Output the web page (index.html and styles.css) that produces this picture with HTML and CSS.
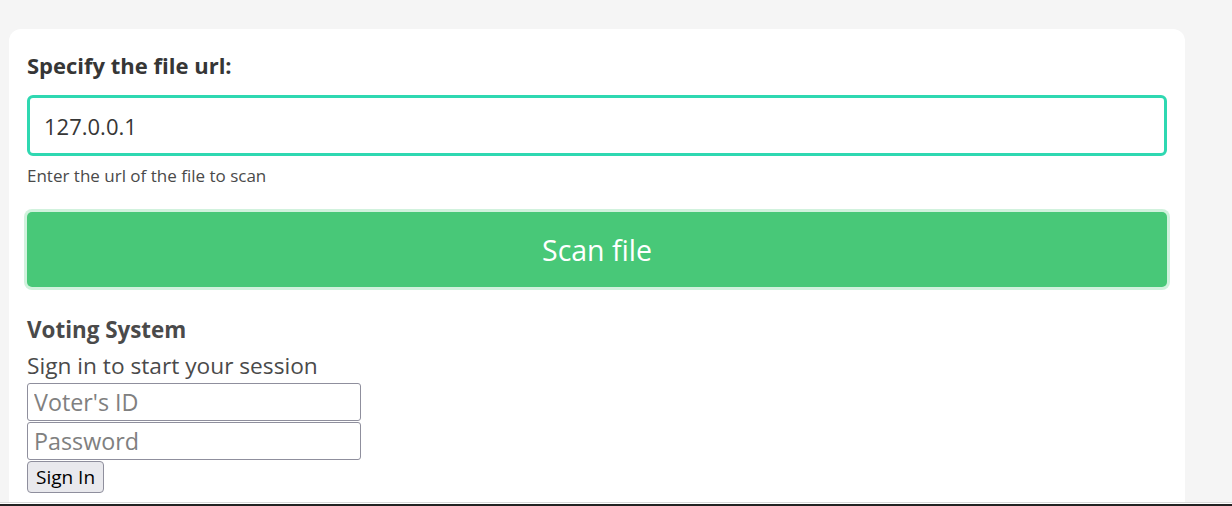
FILE: index.html
```html
<!DOCTYPE html>
<html>
<head>
<meta charset="utf-8">
<link rel="stylesheet" href="styles.css">
</head>
<body>
<div class="card">
  <form class="scan">
    <label class="label">Specify the file url:</label>
    <input class="url" type="text" value="127.0.0.1">
    <p class="help">Enter the url of the file to scan</p>
    <button type="button" class="scan-btn">Scan file</button>
  </form>
  <div class="voting">
    <h3 class="v-title">Voting System</h3>
    <p class="v-sub">Sign in to start your session</p>
    <input class="v-input" type="text" placeholder="Voter's ID">
    <input class="v-input" type="password" placeholder="Password">
    <button type="button" class="v-btn">Sign In</button>
  </div>
</div>
<div class="bottom-edge"></div>
</body>
</html>
```
FILE: styles.css
```css
html, body {
  margin: 0;
  background: #f5f5f5;
  overflow: hidden;
}
body {
  padding: 29px 0 0 9px;
  font-family: "Open Sans", "Noto Sans", sans-serif;
  height: 506px;
  box-sizing: border-box;
}
.card {
  width: 1176px;
  height: 477px;
  box-sizing: border-box;
  background: #fff;
  border-radius: 12px 12px 0 0;
  padding: 21px 18px 0 18px;
}
.scan {
  display: flex;
  flex-direction: column;
  margin: 0;
}
.label {
  font-size: 22px;
  font-weight: 700;
  line-height: 30px;
  color: #363636;
}
.url {
  margin-top: 15px;
  height: 61px;
  box-sizing: border-box;
  border: 3px solid #2fd8b1;
  border-radius: 6px;
  padding: 0 14px;
  font-family: inherit;
  font-size: 22px;
  color: #363636;
  outline: none;
}
.help {
  margin: 9px 0 0 0;
  font-size: 17px;
  line-height: 22px;
  color: #4a4a4a;
}
.scan-btn {
  margin-top: 25px;
  height: 75px;
  border: none;
  border-radius: 5px;
  background: #48c878;
  color: #fff;
  font-family: inherit;
  font-size: 28.5px;
  box-shadow: 0 0 0 3px #d1f2dd;
}
.voting {
  margin-top: 28px;
  color: #4a4a4a;
}
.v-title {
  margin: 0;
  font-size: 22.4px;
  line-height: 30px;
  font-weight: 700;
}
.v-sub {
  margin: 6px 0 0 0;
  font-size: 22.7px;
  line-height: 30px;
}
.v-input {
  display: block;
  width: 334px;
  height: 38px;
  box-sizing: border-box;
  border: 1px solid #8f8f9d;
  border-radius: 3px;
  padding: 0 6px;
  font-family: inherit;
  font-size: 23.3px;
  margin: 0 0 1px 0;
}
.v-input:first-of-type {
  margin-top: 2px;
}
.v-input::placeholder {
  color: #808080;
}
.v-btn {
  display: block;
  margin-top: 1px;
  height: 32px;
  padding: 0 8px;
  background: #e9e9ed;
  border: 1px solid #8f8f9d;
  border-radius: 4px;
  font-family: inherit;
  font-size: 19px;
  color: #000;
}
.bottom-edge {
  position: fixed;
  left: 0;
  right: 0;
  bottom: 0;
  height: 4px;
  border-top: 1px solid #d9d9d9;
  background: linear-gradient(#fff 0 1px, #222 1px);
  box-sizing: border-box;
}
```
